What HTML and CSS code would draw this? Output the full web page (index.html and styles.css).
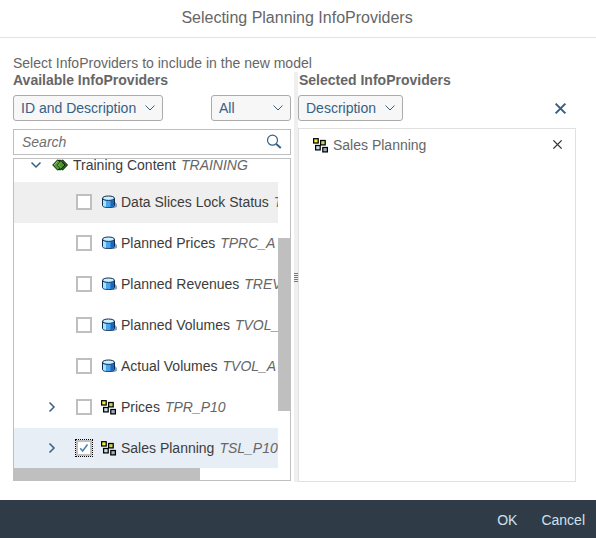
FILE: index.html
```html
<!DOCTYPE html>
<html lang="en">
<head>
<meta charset="utf-8">
<title>Selecting Planning InfoProviders</title>
<link rel="stylesheet" href="styles.css">
</head>
<body>
<svg class="defs" width="0" height="0" aria-hidden="true">
  <symbol id="chev" viewBox="0 0 12 8"><path d="M1.500 1.500 6 6l4.500-4.500" fill="none" stroke="currentColor"/></symbol>
  <symbol id="cross" viewBox="0 0 12 12"><path d="M1.500 1.500l9 9m0-9l-9 9" fill="none" stroke="currentColor"/></symbol>
  <symbol id="cube" viewBox="0 0 16 15">
    <path d="M13 6l3 3v3l-3 1H8z" fill="#8ba5be"/>
    <path d="M1.500 3.500v7c0 1.300 2.700 2 6 2s6-.7 6-2v-7z" fill="#4aa5ee" stroke="#10294d"/>
    <path d="M2 5l3 .8V12l-3-1z" fill="#a5e6ff"/>
    <path d="M9.500 5.800l3.500-.8v5.500l-3.500 1.500z" fill="#1767c0"/>
    <ellipse cx="7.500" cy="3.200" rx="6" ry="2.200" fill="#c8f2ff" stroke="#10294d"/>
  </symbol>
  <symbol id="multi" viewBox="0 0 16 15">
    <g stroke="#000" stroke-width="1.250">
      <rect x=".6" y=".7" width="4.600" height="4.300" fill="#f5ee37"/>
      <rect x="7.600" y="2.500" width="4.600" height="4.400" fill="#c3d657"/>
      <rect x="2.600" y="7.500" width="4.600" height="4.400" fill="#bfe0f2"/>
      <rect x="9.800" y="9.500" width="4.600" height="4.400" fill="#9caebd"/>
    </g>
  </symbol>
  <symbol id="area" viewBox="0 0 16 12">
    <path d="M5.500 6l5-5.200L15.500 6l-5 5.200z" fill="#2d6b1c" stroke="#0b1d08"/>
    <path d="M3 6l5-5.200L13 6l-5 5.200z" fill="#47902d" stroke="#0b1d08"/>
    <path d="M.7 6l5-5.200L8.500 3 5.500 6l3 3-2.800 2.200z" fill="#4e9932" stroke="#0b1d08"/>
    <path d="M9.500 2.800L6.300 6l3 3M5.700 2.300L2.200 6" fill="none" stroke="#9ed477" stroke-width=".8"/>
  </symbol>
</svg>
<div class="dialog">
  <header class="title">Selecting Planning InfoProviders</header>
  <main class="content">
    <p class="intro">Select InfoProviders to include in the new model</p>
    <div class="panes">
      <section class="pane">
        <h2>Available InfoProviders</h2>
        <div class="toolbar">
          <button class="select id-select">ID and Description<svg><use href="#chev"/></svg></button>
          <button class="select all-select">All<svg><use href="#chev"/></svg></button>
        </div>
        <div class="search"><span>Search</span>
          <svg viewBox="0 0 16 16" fill="none" stroke="#346187"><circle cx="6.500" cy="6.200" r="5" stroke-width="1.200"/><path d="M10.200 9.900l4.600 4" stroke-width="2"/></svg>
        </div>
        <div class="tree">
          <div class="rows">
            <div class="row root"><svg class="arrow open"><use href="#chev"/></svg><svg class="icon area"><use href="#area"/></svg><span>Training Content</span><i>TRAINING</i></div>
            <div class="row hover"><span class="arrow"></span><span class="check"></span><svg class="icon"><use href="#cube"/></svg><span>Data Slices Lock Status</span><i>T</i></div>
            <div class="row"><span class="arrow"></span><span class="check"></span><svg class="icon"><use href="#cube"/></svg><span>Planned Prices</span><i>TPRC_A</i></div>
            <div class="row"><span class="arrow"></span><span class="check"></span><svg class="icon"><use href="#cube"/></svg><span>Planned Revenues</span><i>TREV</i></div>
            <div class="row"><span class="arrow"></span><span class="check"></span><svg class="icon"><use href="#cube"/></svg><span>Planned Volumes</span><i>TVOL_</i></div>
            <div class="row"><span class="arrow"></span><span class="check"></span><svg class="icon"><use href="#cube"/></svg><span>Actual Volumes</span><i>TVOL_A</i></div>
            <div class="row"><svg class="arrow" viewBox="0 0 8 12"><path d="M1.500 1.500L6 6l-4.500 4.500"/></svg><span class="check"></span><svg class="icon"><use href="#multi"/></svg><span>Prices</span><i>TPR_P10</i></div>
            <div class="row selected"><svg class="arrow" viewBox="0 0 8 12"><path d="M1.500 1.500L6 6l-4.500 4.500"/></svg><span class="check focus"><svg viewBox="0 0 10 10"><path d="M1.200 5.200l2.500 2.800 4.800-6.500"/></svg></span><svg class="icon"><use href="#multi"/></svg><span>Sales Planning</span><i>TSL_P10</i></div>
          </div>
          <div class="vtrack"><div class="vthumb"></div></div>
          <div class="hthumb"></div>
        </div>
      </section>
      <div class="splitter"><span class="grip"></span></div>
      <section class="pane">
        <h2>Selected InfoProviders</h2>
        <div class="toolbar right">
          <button class="select desc-select">Description<svg><use href="#chev"/></svg></button>
          <svg class="clear"><use href="#cross"/></svg>
        </div>
        <div class="list">
          <div class="item"><svg class="icon"><use href="#multi"/></svg><span>Sales Planning</span><svg class="remove"><use href="#cross"/></svg></div>
        </div>
      </section>
    </div>
  </main>
  <footer class="footer"><span>OK</span><span>Cancel</span></footer>
</div>
</body>
</html>
```
FILE: styles.css
```css
* { box-sizing: border-box; }
body { margin: 0; background: #fff; color: #666; font: 14px/18px "Liberation Sans", Arial, sans-serif; }
svg { display: block; flex: none; }
.defs { position: absolute; }
.dialog { width: 596px; height: 538px; display: flex; flex-direction: column; overflow: hidden; }
.title { height: 38px; border-bottom: 1px solid #e3e3e3; text-align: center; font-size: 16px; line-height: 35px; padding-right: 2px; }
.content { flex: 1; padding: 16px 0 0 13px; }
.intro { margin: 0; height: 18px; line-height: 19px; white-space: nowrap; }
.panes { display: grid; grid-template-columns: 278px 4px 278px; column-gap: 3px; height: 410px; }
.panes > .pane:last-child { margin-left: -3px; width: 278px; }
.pane { display: flex; flex-direction: column; min-width: 0; }
h2 { margin: 0; height: 23px; font-size: 14px; line-height: 17px; white-space: nowrap; }
.pane:last-child h2 { padding-left: 1px; }
.toolbar { display: flex; justify-content: space-between; align-items: center; height: 26px; }
.select { display: flex; align-items: center; justify-content: space-between; height: 26px; border: 1px solid #ababab; border-radius: 3px; background: #f7f7f7; color: #346187; font: inherit; padding: 0 6px 0 7px; white-space: nowrap; }
.select svg { width: 12px; height: 8px; }
.id-select { width: 150px; }
.all-select { width: 80px; }
.desc-select { width: 105px; }
.search { display: flex; justify-content: space-between; align-items: center; height: 26px; margin-top: 8px; padding: 0 8px; border: 1px solid #bfbfbf; font-style: italic; color: #707070; }
.search svg { width: 16px; height: 16px; }
.tree { display: grid; grid-template: 309px 12px / 264px 12px; height: 323px; margin-top: 3px; border: 1px solid #bfbfbf; overflow: hidden; }
.rows { overflow: hidden; }
.row { display: flex; align-items: center; height: 41px; padding: 0 0 2px 34px; white-space: nowrap; color: #3c3c3c; }
.row i { color: #666; margin-left: 5px; }
.row.root { height: 23px; padding: 0 0 11px 16px; }
.hover { background: #efefef; }
.selected { background: #e7eef6; }
.arrow { width: 8px; height: 12px; margin-right: 20px; flex: none; fill: none; stroke: #346187; stroke-width: 1.500; }
.arrow.open { width: 12px; height: 8px; margin-right: 10px; color: #346187; stroke-width: 1.500; }
.check { display: grid; place-items: center; flex: none; width: 16px; height: 16px; border: 2px solid #bfbfbf; background: #fff; margin-right: 9px; }
.check.focus { outline: 1px dotted #000; }
.check svg { width: 10px; height: 10px; fill: none; stroke: #4b80ac; stroke-width: 1.500; }
.icon { width: 16px; height: 15px; margin-right: 4px; }
.row .icon:not(.area) { margin-top: 1px; }
.area { width: 16px; height: 12px; margin-right: 5px; }
.vtrack { padding-top: 79px; }
.vthumb { height: 173px; background: #bfbfbf; }
.hthumb { width: 186px; height: 12px; background: #bfbfbf; }
.splitter { display: grid; place-items: center; background: #efefef; }
.grip { width: 4px; height: 9px; background: repeating-linear-gradient(#777 0 1px, #efefef 1px 2px); }
.right { padding-right: 9px; }
.clear { width: 13px; height: 13px; color: #346187; stroke-width: 1.900; }
.list { height: 354px; margin-top: 7px; border: 1px solid #e0e0e0; }
.item { display: flex; align-items: center; height: 32px; padding: 0 12px 0 14px; }
.remove { width: 11px; height: 11px; margin: -2px 0 0 auto; color: #333; stroke-width: 1.500; }
.footer { display: flex; justify-content: flex-end; align-items: center; gap: 24px; height: 38px; padding: 2px 11px 0 0; background: #2f3c48; color: #d1e0ee; }
```
